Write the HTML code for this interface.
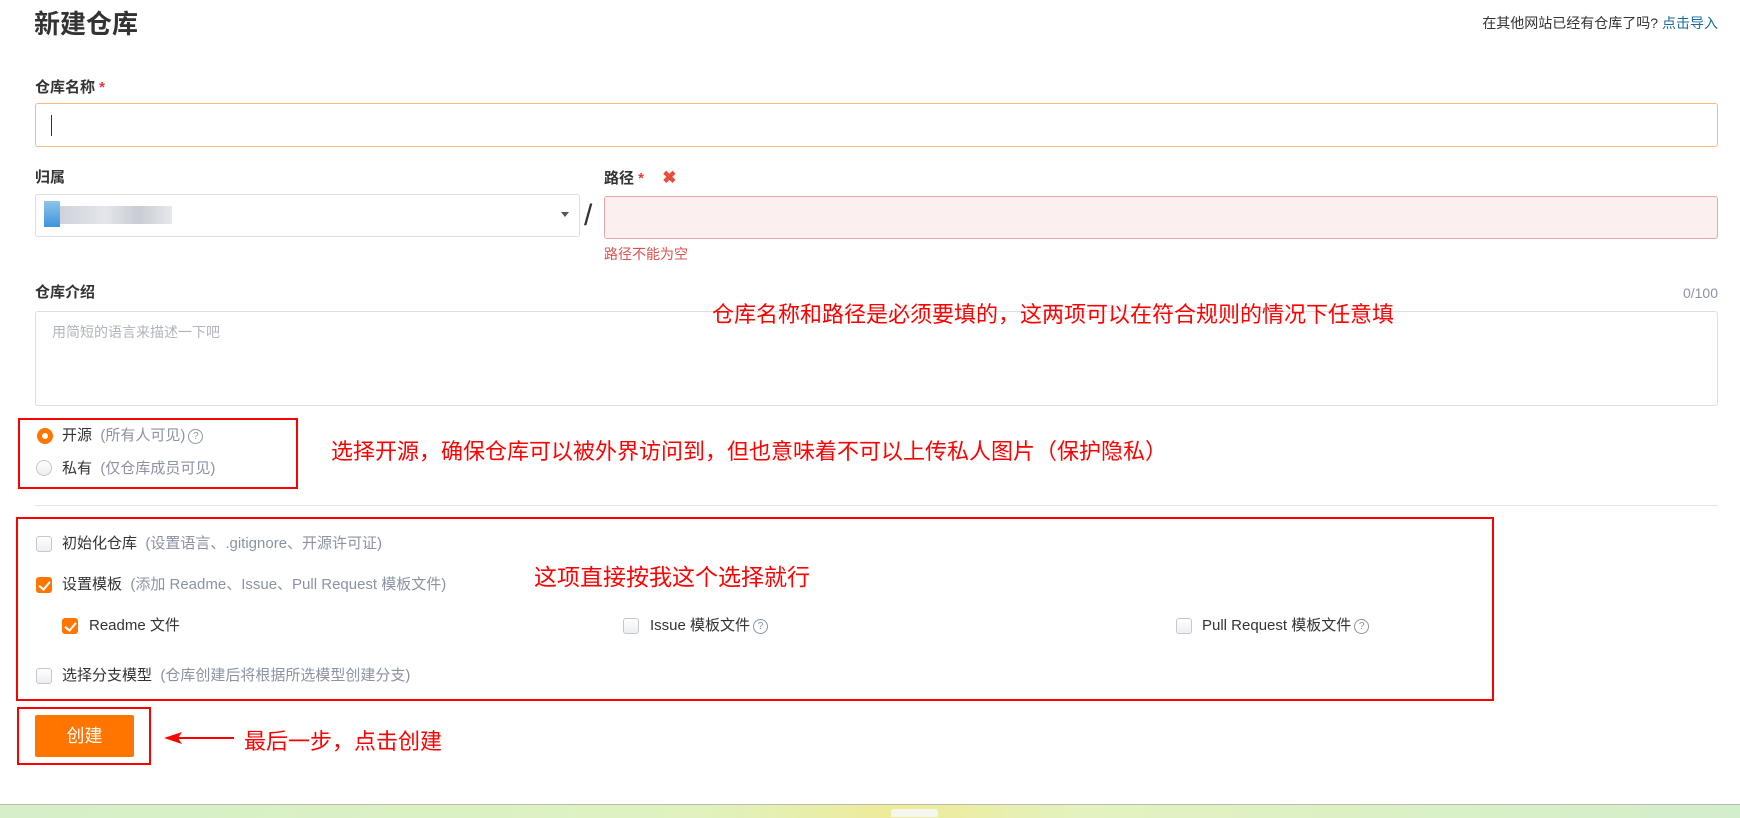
<!DOCTYPE html>
<html><head><meta charset="utf-8"><style>
body{margin:0;width:1740px;height:817px;overflow:hidden;background:#fff;position:relative;font-family:"Liberation Sans","Noto Sans CJK SC",sans-serif;color:#333}
.a{position:absolute;white-space:nowrap}
.lbl{font-size:15px;font-weight:bold;color:#333;line-height:20px}
.req{color:#e4393c}
.box{position:absolute;box-sizing:border-box;border-radius:3px}
.red{position:absolute;box-sizing:border-box;border:2px solid #f00}
.ann{position:absolute;white-space:nowrap;color:#f00;font-size:22px;line-height:26px}
.cb{position:absolute;width:16px;height:16px;box-sizing:border-box;border:1px solid #c8c8cc;border-radius:3px;background:linear-gradient(#fff,#eceef2)}
.cb.on{background:#ff7500;border-color:#ff7500}
.cb.on:after{content:"";position:absolute;left:4px;top:1px;width:5px;height:9px;border:solid #fff;border-width:0 2px 2px 0;transform:rotate(40deg)}
.t{font-size:15px;color:#333;line-height:20px}
.g{color:#8c92a4}
.q{display:inline-block;width:13px;height:13px;border:1px solid #8c92a4;border-radius:50%;font-size:10px;line-height:13px;text-align:center;color:#8c92a4;vertical-align:1px;margin-left:3px}
</style></head><body>
<div class="a" style="left:34px;top:8px;font-size:26px;font-weight:bold;line-height:32px">新建仓库</div>
<div class="a" style="right:22px;top:14px;font-size:14px;line-height:18px;color:#333">在其他网站已经有仓库了吗? <span style="color:#1a6a9c">点击导入</span></div>

<div class="a lbl" style="left:35px;top:78px">仓库名称 <span class="req">*</span></div>
<div class="box" style="left:35px;top:103px;width:1683px;height:44px;border:1px solid #f5bb80"></div>
<div class="a" style="left:51px;top:115px;width:1px;height:21px;background:#333"></div>

<div class="a lbl" style="left:35px;top:168px">归属</div>
<div class="box" style="left:35px;top:194px;width:545px;height:43px;border:1px solid #dcdfe5"></div>
<div class="a" style="left:44px;top:201px;width:16px;height:26px;background:linear-gradient(#8ec4ea,#3c96dc)"></div>
<div class="a" style="left:60px;top:206px;width:112px;height:18px;background:linear-gradient(90deg,#cfd2da,#e4e6eb 40%,#c9ccd4 70%,#e6e8ec)"></div>
<div class="a" style="left:561px;top:212px;border:4px solid transparent;border-top:5px solid #555"></div>
<div class="a" style="left:584px;top:198px;font-size:30px;color:#333;line-height:36px">/</div>
<div class="a lbl" style="left:604px;top:168px">路径 <span class="req">*</span> <span style="color:#e74c3c;margin-left:14px;font-size:17px">✖</span></div>
<div class="box" style="left:604px;top:196px;width:1114px;height:43px;border:1px solid #e3a9a9;background:#fcefef"></div>
<div class="a" style="left:604px;top:245px;font-size:14px;color:#d9534f;line-height:18px">路径不能为空</div>

<div class="a lbl" style="left:35px;top:283px">仓库介绍</div>
<div class="a" style="right:22px;top:284px;font-size:14px;color:#8c92a4;line-height:18px">0/100</div>
<div class="box" style="left:35px;top:311px;width:1683px;height:95px;border:1px solid #dcdfe5"></div>
<div class="a" style="left:52px;top:323px;font-size:14px;color:#b0b4be;line-height:18px">用简短的语言来描述一下吧</div>
<div class="ann" style="left:712px;top:302px">仓库名称和路径是必须要填的，这两项可以在符合规则的情况下任意填</div>

<div class="red" style="left:18px;top:418px;width:280px;height:71px"></div>
<div class="a" style="left:37px;top:428px;width:16px;height:16px;border-radius:50%;background:#ff7500"></div>
<div class="a" style="left:42px;top:433px;width:6px;height:6px;border-radius:50%;background:#fff"></div>
<div class="a t" style="left:62px;top:426px">开源 <span class="g">&nbsp;(所有人可见)</span><span class="q">?</span></div>
<div class="a" style="left:36px;top:460px;width:16px;height:16px;border-radius:50%;border:1px solid #c8c8cc;box-sizing:border-box;background:linear-gradient(#fff,#eceef2)"></div>
<div class="a t" style="left:62px;top:459px">私有 <span class="g">&nbsp;(仅仓库成员可见)</span></div>
<div class="ann" style="left:331px;top:439px">选择开源，确保仓库可以被外界访问到，但也意味着不可以上传私人图片（保护隐私）</div>

<div class="a" style="left:35px;top:505px;width:1683px;height:1px;background:#e1e4e8"></div>

<div class="red" style="left:16px;top:517px;width:1478px;height:184px"></div>
<div class="cb" style="left:36px;top:536px"></div>
<div class="a t" style="left:62px;top:534px">初始化仓库 <span class="g">&nbsp;(设置语言、.gitignore、开源许可证)</span></div>
<div class="cb on" style="left:36px;top:577px"></div>
<div class="a t" style="left:62px;top:575px">设置模板 <span class="g">&nbsp;(添加 Readme、Issue、Pull Request 模板文件)</span></div>
<div class="ann" style="left:534px;top:564px;font-size:23px">这项直接按我这个选择就行</div>
<div class="cb on" style="left:62px;top:618px"></div>
<div class="a t" style="left:89px;top:616px">Readme 文件</div>
<div class="cb" style="left:623px;top:618px"></div>
<div class="a t" style="left:650px;top:616px">Issue 模板文件<span class="q">?</span></div>
<div class="cb" style="left:1176px;top:618px"></div>
<div class="a t" style="left:1202px;top:616px">Pull Request 模板文件<span class="q">?</span></div>
<div class="cb" style="left:36px;top:668px"></div>
<div class="a t" style="left:62px;top:666px">选择分支模型 <span class="g">&nbsp;(仓库创建后将根据所选模型创建分支)</span></div>

<div class="red" style="left:17px;top:707px;width:134px;height:58px"></div>
<div class="a" style="left:35px;top:715px;width:99px;height:42px;background:#ff7500;border-radius:2px;color:#fff;font-size:18px;line-height:42px;text-align:center">创建</div>
<svg class="a" style="left:160px;top:728px" width="76" height="20"><path d="M74 10H18" stroke="#f00" stroke-width="2"/><path d="M4 10L22 4L18 10L22 16Z" fill="#f00"/></svg>
<div class="ann" style="left:244px;top:729px">最后一步，点击创建</div>

<div class="a" style="left:0;top:804px;width:1740px;height:13px;border-top:1px solid #b8bcb0;background:linear-gradient(90deg,#d6efc8,#dff2c0 40%,#efeb98 52%,#e3f2c0 62%,#d3eecb)"></div>
<div class="a" style="left:891px;top:809px;width:47px;height:8px;background:#f4f7ef;border-radius:3px 3px 0 0"></div>
</body></html>
